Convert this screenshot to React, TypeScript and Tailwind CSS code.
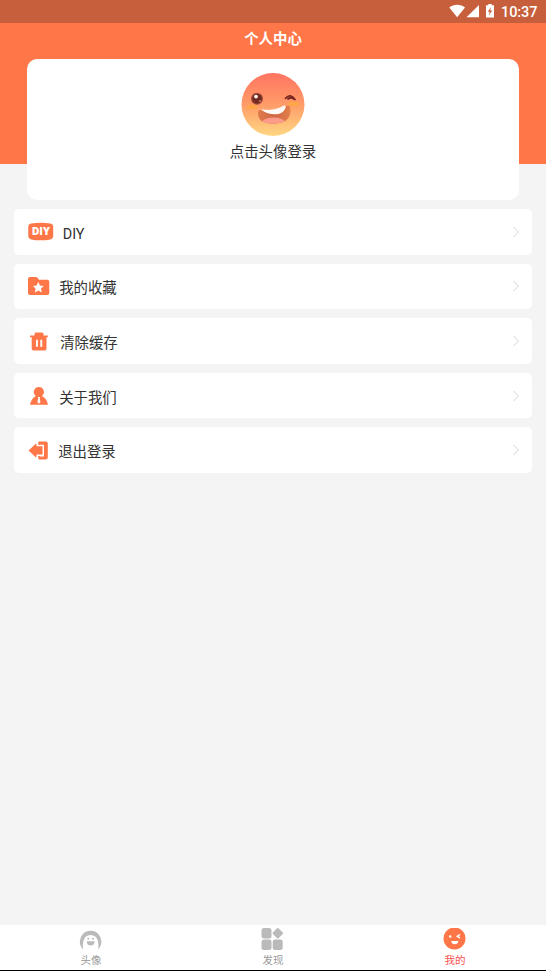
import type { ReactNode } from "react";

const ORANGE = "#ff7748";

function StatusBar() {
  return (
    <div className="flex h-[23px] items-center justify-end bg-[#c85f3c] pr-[8px] text-white">
      <svg width="46" height="14" viewBox="0 0 46 14" fill="currentColor" className="mb-[1px]">
        <path d="M.3 3.600C4.800-.1 11.500-.1 16 3.600L8.150 13.200Z" />
        <path d="M30 1V13.300H17.500Z" />
        <path
          fillRule="evenodd"
          d="M39.300 0h3.400v1.300h2.300v12.200h-8V1.300h2.300ZM42 3.200l-3.300 4.500h2l-.8 3.800 3.400-4.900h-2.100Z"
        />
      </svg>
      <span className="mt-[1px] ml-[6px] w-[37px] font-[Roboto,sans-serif] text-[14.500px] leading-[23px] font-medium tracking-[-0.1px] whitespace-nowrap">
        10:37
      </span>
    </div>
  );
}

function Avatar() {
  return (
    <svg width="64" height="64" viewBox="0 0 64 64" className="block">
      <defs>
        <linearGradient id="face" x1="0" y1="0" x2="0" y2="1">
          <stop offset="0" stopColor="#ff7461" />
          <stop offset=".5" stopColor="#ff9c68" />
          <stop offset="1" stopColor="#ffd783" />
        </linearGradient>
        <linearGradient id="mouth" x1="0" y1="0" x2="1" y2="0">
          <stop offset="0" stopColor="#e27d4c" />
          <stop offset=".5" stopColor="#cf6845" />
          <stop offset="1" stopColor="#e5824c" />
        </linearGradient>
        <clipPath id="mouthClip">
          <path d="M19 37Q33 43 45 33Q49.500 31 49.500 38C49.500 47 42 50.500 33 50.500C24 50.500 17 49 17 40Q17 37 19 37Z" />
        </clipPath>
      </defs>
      <circle cx="32" cy="31.500" r="31.500" fill="url(#face)" />
      <ellipse cx="11" cy="33.800" rx="5.500" ry="2.300" fill="#ffa747" />
      <ellipse cx="52.500" cy="31" rx="5.500" ry="2.500" fill="#ffa747" />
      <circle cx="16" cy="25.700" r="6" fill="#a44b38" />
      <circle cx="16" cy="25.700" r="4.800" fill="#702b22" />
      <circle cx="15" cy="23.600" r="1.900" fill="#fff4ed" />
      <circle cx="19" cy="28" r="1" fill="#c97862" />
      <path d="M44.500 25.300Q49.500 20 54 26.500M47 26Q50 23.500 53 26" fill="none" stroke="#792522" strokeWidth="1.700" strokeLinecap="round" />
      <g clipPath="url(#mouthClip)">
        <path d="M15 30H51V52H15Z" fill="url(#mouth)" />
        <ellipse cx="32.500" cy="49.500" rx="11.500" ry="5" fill="#ff9b8b" />
      </g>
      <path d="M20.500 36.300Q33 38.500 42.500 32.800Q45.500 31.500 44.500 35Q42 41.500 33 41.300Q24 41 20.500 36.300Z" fill="#fffaf5" />
    </svg>
  );
}

function DiyIcon() {
  return (
    <svg width="26" height="20" viewBox="0 0 26 20" className="block">
      <path d="M3 1.500Q13-.2 22.500 1.500Q25.200 2 25.200 4.500V14.500Q25.200 16.800 22.500 17.400Q13 19.200 3 17.400Q.3 16.800 .3 14.500V4.500Q.3 2 3 1.500Z" fill={ORANGE} />
      <text x="3.700" y="13.200" textLength="18.300" lengthAdjust="spacingAndGlyphs" fill="white" fontFamily="Open Sans, sans-serif" fontSize="11" fontWeight="800">
        DIY
      </text>
    </svg>
  );
}

function FolderIcon() {
  return (
    <svg width="22" height="20" viewBox="0 0 22 20" className="block">
      <path d="M2 1H8Q9 1 9.600 1.900L11 3.800H19.300Q21.300 3.800 21.300 5.800V17Q21.300 19 19.300 19H2Q0 19 0 17V3Q0 1 2 1Z" fill={ORANGE} />
      <path d="M10.300 6L12 9.500L15.800 10L13 12.600L13.700 16.400L10.300 14.500L6.900 16.400L7.600 12.600L4.800 10L8.600 9.500Z" fill="white" />
    </svg>
  );
}

function TrashIcon() {
  return (
    <svg width="18" height="19" viewBox="0 0 18 19" className="block">
      <path
        fillRule="evenodd"
        fill={ORANGE}
        d="M6 .5H12Q13.500 .5 13.500 2V3.500H17.800V5.300H16.500V16.800Q16.500 18.500 14.800 18.500H3.400Q1.700 18.500 1.700 16.800V5.300H0V3.500H4.500V2Q4.500 .5 6 .5ZM6 7.700V14.800H7.900V7.700ZM10.300 7.700V14.800H12.200V7.700Z"
      />
    </svg>
  );
}

function PersonIcon() {
  return (
    <svg width="18" height="18" viewBox="0 0 18 18" className="block">
      <path d="M8.800 0A5.100 5.100 0 0 1 12 9.100Q16.500 11.500 18 17.700H0Q1.500 11.500 5.700 9.100A5.100 5.100 0 0 1 8.800 0Z" fill={ORANGE} />
      <path d="M7.800 10H10L9.700 11.500L10.500 15L8.900 16.800L7.300 15L8.200 11.500Z" fill="white" />
    </svg>
  );
}

function LogoutIcon() {
  return (
    <svg width="20" height="19" viewBox="0 0 20 19" className="block">
      <path d="M.5 9.500L7.500 3Q8.500 2.200 8.500 3.500V5.300H14.500V13.500H8.500V15.500Q8.500 16.700 7.500 16Z" fill={ORANGE} />
      <path d="M11.300 .5H17.800Q19.800 .5 19.800 2.500V16.500Q19.800 18.500 17.800 18.500H11.300Q10.300 18.500 10.300 17.500V14.900H12V15.500H16V3.700H12V4H10.300V1.500Q10.300 .5 11.300 .5Z" fill={ORANGE} />
    </svg>
  );
}

function MenuRow({ icon, label, gap }: { icon: ReactNode; label: string; gap: string }) {
  return (
    <div className="flex h-[45.600px] items-center rounded-[5px] bg-white pr-[12.500px] pl-[14px]">
      {icon}
      <span className={`${gap} mt-[6px] text-[14.400px] leading-[20px] text-[#333]`}>{label}</span>
      <svg width="8" height="12" viewBox="0 0 8 12" className="ml-auto block" fill="none" stroke="#d4d4d4">
        <path d="M1.500 1L6.500 6L1.500 11" />
      </svg>
    </div>
  );
}

function Tab({ icon, label, color }: { icon: ReactNode; label: string; color: string }) {
  return (
    <div className="flex flex-1 flex-col items-center pt-[3px]">
      {icon}
      <span className={`${color} mt-[1px] text-[10.500px] leading-[15px]`}>{label}</span>
    </div>
  );
}

export default function App() {
  return (
    <div className="flex h-[971px] w-[546px] flex-col overflow-hidden bg-[#f4f4f4] font-['Roboto','Noto_Sans_CJK_SC',sans-serif]">
      <StatusBar />
      <header className="h-[140.500px] shrink-0 bg-[#ff7748] px-[27px]">
        <h1 className="h-[36px] text-center text-[14.400px] leading-[34px] font-bold text-white">个人中心</h1>
        <section className="flex h-[141px] flex-col items-center rounded-[10px] bg-white pt-[14px]">
          <Avatar />
          <span className="mt-[6px] text-[14.400px] leading-[20px] text-[#333]">点击头像登录</span>
        </section>
      </header>
      <main className="mt-[45.500px] flex flex-1 flex-col gap-[9px] px-[13.700px]">
        <MenuRow icon={<DiyIcon />} label="DIY" gap="ml-[9px]" />
        <MenuRow icon={<FolderIcon />} label="我的收藏" gap="ml-[9.500px]" />
        <MenuRow icon={<div className="pt-[1px] pl-[2.500px]"><TrashIcon /></div>} label="清除缓存" gap="ml-[12px]" />
        <MenuRow icon={<div className="pl-[2px]"><PersonIcon /></div>} label="关于我们" gap="ml-[11.500px]" />
        <MenuRow icon={<LogoutIcon />} label="退出登录" gap="ml-[10.500px]" />
      </main>
      <nav className="flex h-[46px] shrink-0 border-b border-black bg-white">
        <Tab
          label="头像"
          color="text-[#999]"
          icon={
            <svg width="24" height="24" viewBox="0 0 24 24">
              <path d="M4.200 21.500A10.800 10.800 0 1 1 19 21.500Q20 17 18.800 13Q17.500 7 11.600 7Q5.700 7 4.500 13Q3.300 17 4.200 21.500Z" fill="#bababa" />
              <circle cx="9.300" cy="10.800" r="1" fill="#bababa" />
              <circle cx="14" cy="10.800" r="1" fill="#bababa" />
              <path d="M7.700 13.200H15.700Q15.400 17.600 11.700 17.600Q8 17.600 7.700 13.200Z" fill="#bababa" />
            </svg>
          }
        />
        <Tab
          label="发现"
          color="text-[#999]"
          icon={
            <svg width="24" height="24" viewBox="0 0 24 24" fill="#bababa">
              <rect x=".5" y="0" width="10" height="10.500" rx="2.500" />
              <rect x=".5" y="11.500" width="10" height="10.500" rx="2.500" />
              <rect x="11.700" y="11.500" width="10" height="10.500" rx="2.500" />
              <rect x="12.800" y="1.300" width="8" height="8" rx="1" transform="rotate(45 16.800 5.300)" />
            </svg>
          }
        />
        <Tab
          label="我的"
          color="text-[#fa5151]"
          icon={
            <svg width="24" height="24" viewBox="0 0 24 24">
              <circle cx="11.500" cy="10.500" r="11" fill={ORANGE} />
              <circle cx="7.200" cy="8.500" r="1.200" fill="white" />
              <path d="M17 6.500L14.300 8.300L17 10" fill="none" stroke="white" strokeWidth="1.500" />
              <path d="M8.300 13H15.300Q14.900 16.300 11.800 16.300Q8.700 16.300 8.300 13Z" fill="white" />
            </svg>
          }
        />
      </nav>
    </div>
  );
}
